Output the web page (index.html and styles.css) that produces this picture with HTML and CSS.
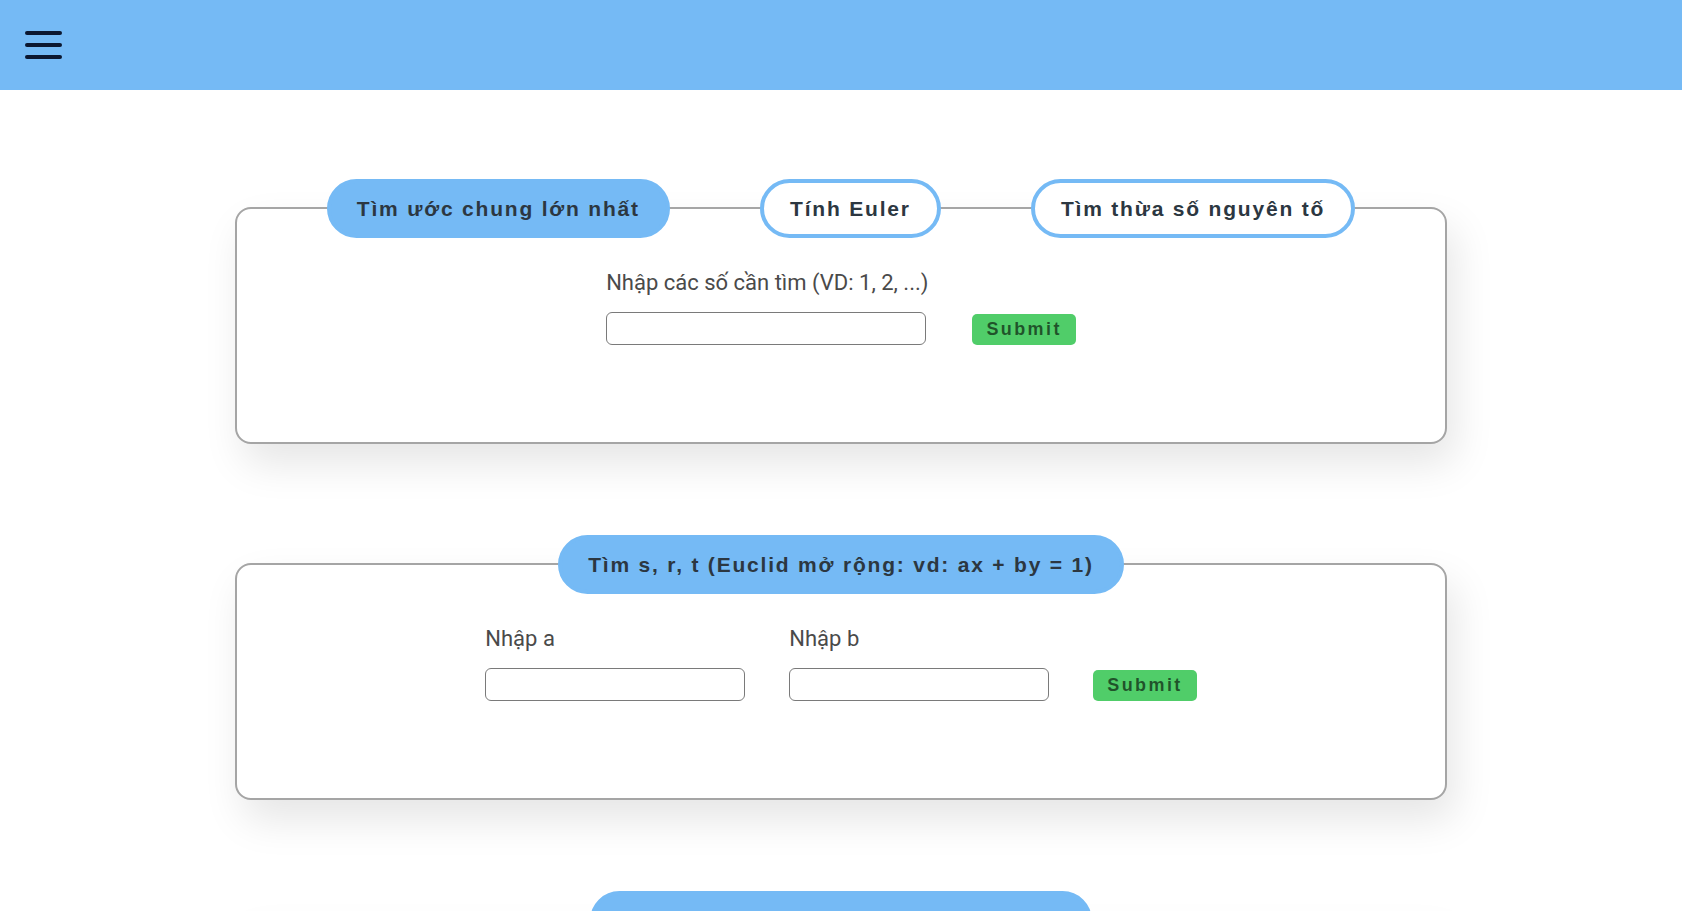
FILE: index.html
```html
<!DOCTYPE html>
<html lang="vi">
<head>
<meta charset="utf-8">
<title>Số học</title>
<link rel="stylesheet" href="styles.css">
</head>
<body>
<header class="topbar">
  <button class="menu-btn" aria-label="Menu"><span></span><span></span><span></span></button>
</header>
<main class="content">
  <section class="card">
    <div class="tabs">
      <div class="pill pill--active">Tìm ước chung lớn nhất</div>
      <div class="pill">Tính Euler</div>
      <div class="pill">Tìm thừa số nguyên tố</div>
    </div>
    <form class="form">
      <div class="field">
        <label class="label">Nhập các số cần tìm (VD: 1, 2, ...)</label>
        <input class="input input--wide" type="text">
      </div>
      <button class="submit" type="button">Submit</button>
    </form>
  </section>

  <section class="card">
    <div class="tabs">
      <div class="pill pill--active">Tìm s, r, t (Euclid mở rộng: vd: ax + by = 1)</div>
    </div>
    <form class="form">
      <div class="field">
        <label class="label">Nhập a</label>
        <input class="input" type="text">
      </div>
      <div class="field">
        <label class="label">Nhập b</label>
        <input class="input" type="text">
      </div>
      <button class="submit" type="button">Submit</button>
    </form>
  </section>

  <section class="card">
    <div class="tabs">
      <div class="pill pill--active">Giải phương trình đồng dư tuyến tính</div>
    </div>
    <form class="form">
      <div class="field">
        <label class="label">Nhập a</label>
        <input class="input" type="text">
      </div>
      <div class="field">
        <label class="label">Nhập b</label>
        <input class="input" type="text">
      </div>
      <button class="submit" type="button">Submit</button>
    </form>
  </section>
</main>
</body>
</html>
```

FILE: styles.css
```css
html, body {
  margin: 0;
  padding: 0;
  background: #ffffff;
  font-family: Roboto, "Liberation Sans", sans-serif;
}

.topbar {
  height: 90px;
  background: #75baf5;
  display: flex;
  align-items: center;
  padding-left: 25px;
}

.menu-btn {
  display: flex;
  flex-direction: column;
  gap: 8px;
  padding: 0;
  margin: 0;
  border: none;
  background: transparent;
  cursor: pointer;
}

.menu-btn span {
  display: block;
  width: 37px;
  height: 4px;
  border-radius: 2px;
  background: #0b1730;
}

.content {
  display: flex;
  flex-direction: column;
  align-items: center;
  gap: 119px;
  padding: 117px 0 80px;
}

.card {
  box-sizing: border-box;
  width: 72.1%;
  height: 237px;
  border: 2px solid #a5a5a5;
  border-radius: 16px;
  background: #ffffff;
  box-shadow: 8px 20px 40px rgba(0, 0, 0, 0.1);
}

.tabs {
  display: flex;
  justify-content: space-evenly;
  margin-top: -30px;
}

.pill {
  box-sizing: border-box;
  height: 59px;
  display: flex;
  align-items: center;
  padding: 0 26px;
  border: 4px solid #75baf5;
  border-radius: 30px;
  background: #ffffff;
  font-family: "Liberation Sans", Arial, sans-serif;
  font-weight: bold;
  font-size: 21px;
  letter-spacing: 1.8px;
  color: #2c3741;
  white-space: nowrap;
}

.pill--active {
  background: #75baf5;
}

.form {
  display: flex;
  justify-content: center;
  align-items: flex-end;
  gap: 44px;
  margin-top: 32px;
}

.field {
  display: flex;
  flex-direction: column;
}

.label {
  font-size: 22px;
  line-height: 26px;
  color: #4a4a4a;
  margin-bottom: 16px;
  white-space: nowrap;
}

.input {
  box-sizing: border-box;
  width: 260px;
  height: 33px;
  margin: 0;
  border: 1px solid #7a7a7a;
  border-radius: 6px;
  background: #ffffff;
}

.input--wide {
  width: 320px;
}

.submit {
  height: 31px;
  padding: 0 14px;
  border: none;
  border-radius: 5px;
  background: #50cd69;
  font-family: "Liberation Sans", Arial, sans-serif;
  font-weight: bold;
  font-size: 18px;
  letter-spacing: 2.4px;
  color: rgba(0, 0, 0, 0.6);
  cursor: pointer;
}
```
